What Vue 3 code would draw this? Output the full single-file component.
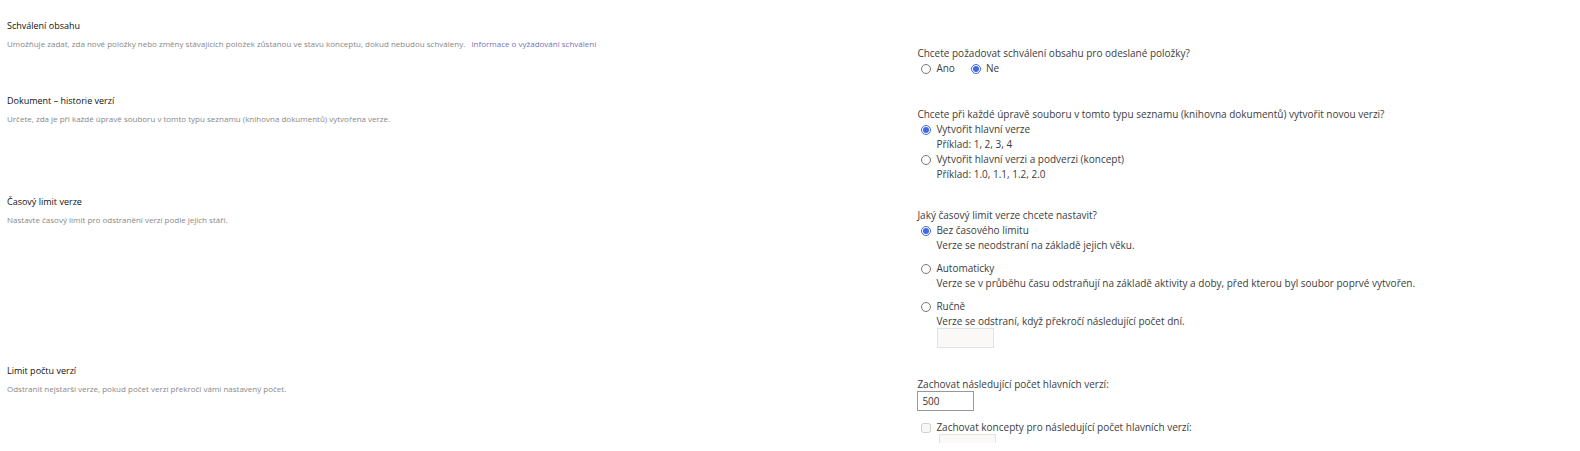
<template>
  <main class="settings">
    <section class="row">
      <div class="info">
        <h3>Schválení obsahu</h3>
        <p>
          Umožňuje zadat, zda nové položky nebo změny stávajících položek zůstanou ve stavu konceptu, dokud nebudou schváleny.
          <a href="#">Informace o vyžadování schválení</a>
        </p>
      </div>
      <div class="fields first">
        <fieldset>
          <legend>Chcete požadovat schválení obsahu pro odeslané položky?</legend>
          <div class="inline">
            <label class="option"><input v-model="approval" type="radio" name="approval" value="yes" />Ano</label>
            <label class="option"><input v-model="approval" type="radio" name="approval" value="no" />Ne</label>
          </div>
        </fieldset>
      </div>
    </section>

    <section class="row">
      <div class="info">
        <h3>Dokument – historie verzí</h3>
        <p>Určete, zda je při každé úpravě souboru v tomto typu seznamu (knihovna dokumentů) vytvořena verze.</p>
      </div>
      <div class="fields">
        <fieldset>
          <legend>Chcete při každé úpravě souboru v tomto typu seznamu (knihovna dokumentů) vytvořit novou verzi?</legend>
          <div v-for="item in versionOptions" :key="item.value">
            <label class="option">
              <input v-model="versioning" type="radio" name="versioning" :value="item.value" />{{ item.label }}
            </label>
            <div class="hint">{{ item.hint }}</div>
          </div>
        </fieldset>
      </div>
    </section>

    <section class="row">
      <div class="info">
        <h3>Časový limit verze</h3>
        <p>Nastavte časový limit pro odstranění verzí podle jejich stáří.</p>
      </div>
      <div class="fields">
        <fieldset>
          <legend>Jaký časový limit verze chcete nastavit?</legend>
          <div v-for="item in limitOptions" :key="item.value" class="spaced">
            <label class="option">
              <input v-model="timeLimit" type="radio" name="timeLimit" :value="item.value" />{{ item.label }}
            </label>
            <div class="hint">{{ item.hint }}</div>
          </div>
          <input
            v-model="days"
            class="number days"
            type="text"
            aria-label="Počet dní"
            :disabled="timeLimit !== 'manual'"
          />
        </fieldset>
      </div>
    </section>

    <section class="row">
      <div class="info">
        <h3>Limit počtu verzí</h3>
        <p>Odstranit nejstarší verze, pokud počet verzí překročí vámi nastavený počet.</p>
      </div>
      <div class="fields">
        <label class="caption" for="major">Zachovat následující počet hlavních verzí:</label>
        <input id="major" v-model="majorCount" class="number" type="text" />
        <label class="option drafts">
          <input v-model="keepDrafts" type="checkbox" :disabled="versioning !== 'minor'" />Zachovat koncepty pro následující počet hlavních verzí:
        </label>
        <input
          v-model="draftCount"
          class="number draft-count"
          type="text"
          aria-label="Počet konceptů"
          :disabled="!keepDrafts"
        />
      </div>
    </section>
  </main>
</template>

<script setup>
import { ref } from 'vue'

const approval = ref('no')
const versioning = ref('major')
const timeLimit = ref('none')
const days = ref('')
const majorCount = ref('500')
const keepDrafts = ref(false)
const draftCount = ref('')

const versionOptions = [
  { value: 'major', label: 'Vytvořit hlavní verze', hint: 'Příklad: 1, 2, 3, 4' },
  { value: 'minor', label: 'Vytvořit hlavní verzi a podverzi (koncept)', hint: 'Příklad: 1.0, 1.1, 1.2, 2.0' }
]

const limitOptions = [
  { value: 'none', label: 'Bez časového limitu', hint: 'Verze se neodstraní na základě jejich věku.' },
  {
    value: 'auto',
    label: 'Automaticky',
    hint: 'Verze se v průběhu času odstraňují na základě aktivity a doby, před kterou byl soubor poprvé vytvořen.'
  },
  { value: 'manual', label: 'Ručně', hint: 'Verze se odstraní, když překročí následující počet dní.' }
]
</script>

<style>
body {
  margin: 0;
  background: #fff;
}
</style>

<style scoped>
.settings {
  box-sizing: border-box;
  height: calc(100vh - 8px);
  padding-top: 18px;
  overflow: hidden;
  font-family: 'Open Sans', 'Noto Sans', sans-serif;
  font-size: 10px;
  line-height: 15px;
  color: #3c3c3c;
}

.row {
  display: grid;
  grid-template-columns: 58% 1fr;
}

.info {
  padding-left: 7px;
}

h3 {
  margin: 0;
  font-size: 9px;
  font-weight: 400;
  color: #111;
}

p {
  margin: 3px 0 0;
  font-size: 8px;
  color: #888;
}

a {
  margin-left: 4px;
  color: #7474b8;
  text-decoration: none;
}

.fields {
  padding: 14px 0 12px 1px;
}

.first {
  padding-top: 28px;
  padding-bottom: 17px;
}

fieldset {
  min-width: 0;
  margin: 0;
  padding: 0;
  border: 0;
}

legend,
.caption {
  display: block;
  padding: 0;
}

.inline {
  display: flex;
  gap: 12px;
}

.option {
  display: flex;
  align-items: center;
  gap: 5px;
}

.option input {
  flex-shrink: 0;
  width: 10px;
  height: 10px;
  margin: 0 0 0 4px;
  accent-color: #4169e1;
}

.hint {
  margin-left: 19px;
}

.spaced + .spaced {
  margin-top: 8px;
}

.number {
  display: block;
  box-sizing: border-box;
  width: 57px;
  height: 20px;
  margin: -1px 0 0;
  padding: 0 4px;
  border: 1px solid #999;
  border-radius: 0;
  background: #fff;
  font: inherit;
  color: #333;
}

.number:disabled {
  border-color: #e3e3e3;
  background: #faf9f8;
}

.days {
  margin-bottom: 3px;
  margin-left: 20px;
}

.drafts {
  margin-top: 9px;
}

.draft-count {
  margin-left: 22px;
}
</style>
